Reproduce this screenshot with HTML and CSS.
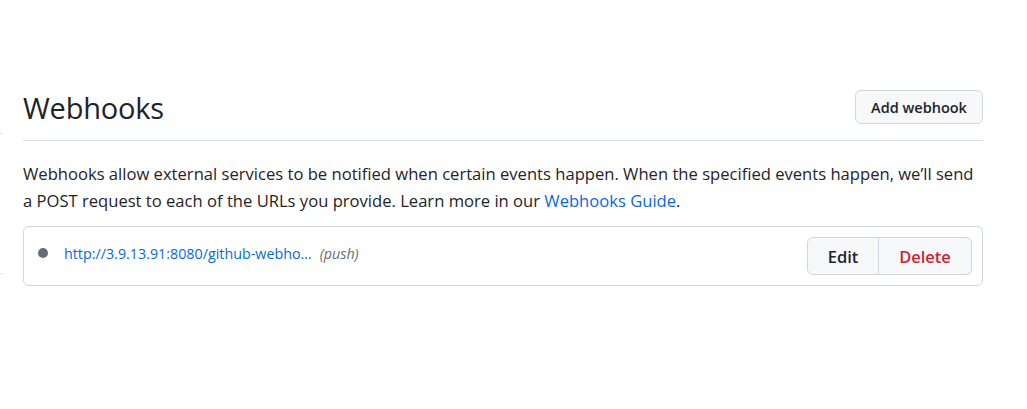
FILE: index.html
```html
<!DOCTYPE html>
<html lang="en">
<head>
<meta charset="utf-8">
<title>Webhooks</title>
<link rel="stylesheet" href="styles.css">
</head>
<body>
<div class="layout">
  <div class="gutter">
    <span class="tick tick-a"></span>
    <span class="tick tick-b"></span>
  </div>
  <main class="main">
    <div class="subhead">
      <h2 class="subhead-title">Webhooks</h2>
      <button class="btn btn-add">Add webhook</button>
    </div>
    <p class="intro">Webhooks allow external services to be notified when certain events happen. When the specified events happen, we’ll send a POST request to each of the URLs you provide. Learn more in our <a href="#" class="link">Webhooks Guide</a>.</p>
    <div class="hook-box">
      <div class="hook-item">
        <div class="hook-info">
          <span class="dot"></span>
          <a href="#" class="hook-url">http://3.9.13.91:8080/github-webho…</a>
          <span class="hook-events">(push)</span>
        </div>
        <div class="btn-group">
          <button class="btn btn-group-item">Edit</button>
          <button class="btn btn-group-item btn-danger">Delete</button>
        </div>
      </div>
    </div>
  </main>
</div>
</body>
</html>
```
FILE: styles.css
```css
* { box-sizing: border-box; }
html, body { margin: 0; background: #ffffff; }
body {
  font-family: "Open Sans", "Noto Sans", sans-serif;
  color: #1f2328;
}
.layout {
  display: flex;
  gap: 20px;
}
.gutter {
  width: 3px;
  display: flex;
  flex-direction: column;
}
.tick {
  display: block;
  width: 3px;
  height: 1px;
  background: #e3e3e3;
}
.tick-a { margin-top: 133px; }
.tick-b { margin-top: 139px; }
.main {
  width: 960px;
  padding-top: 88px;
}
.subhead {
  display: flex;
  align-items: flex-start;
  justify-content: space-between;
  border-bottom: 1px solid #d8dee4;
  height: 53px;
}
.subhead-title {
  margin: 0;
  font-size: 29px;
  font-weight: 400;
  line-height: 40px;
  letter-spacing: -0.2px;
}
.btn {
  font-family: inherit;
  font-weight: 600;
  color: #1f2328;
  background: #f6f8fa;
  border: 1px solid #d0d7de;
  border-radius: 6px;
  cursor: pointer;
}
.btn-add {
  margin-top: 2px;
  height: 34px;
  width: 128px;
  font-size: 14.5px;
  padding: 0;
}
.intro {
  margin: 20px 0 12px;
  font-size: 16.6px;
  line-height: 26.5px;
}
.link { color: #0969da; text-decoration: none; }
.hook-box {
  border: 1px solid #d0d7de;
  border-radius: 6px;
}
.hook-item {
  display: flex;
  align-items: center;
  height: 58px;
  padding: 0 10px 0 14px;
}
.hook-info {
  display: flex;
  align-items: center;
  padding-bottom: 6px;
}
.dot {
  width: 10px;
  height: 10px;
  border-radius: 50%;
  background: #656d76;
  margin-right: 16px;
}
.hook-url {
  color: #0969da;
  text-decoration: none;
  font-size: 14.3px;
}
.hook-events {
  margin-left: 8px;
  font-size: 14.3px;
  font-style: italic;
  color: #656d76;
}
.btn-group {
  margin-left: auto;
  display: flex;
}
.btn-group-item {
  height: 38px;
  font-size: 16.5px;
  padding: 0;
}
.btn-group-item:first-child {
  width: 72px;
  border-radius: 6px 0 0 6px;
}
.btn-group-item + .btn-group-item {
  width: 93px;
  border-left: 0;
  border-radius: 0 6px 6px 0;
}
.btn-danger { color: #cf222e; }
```
